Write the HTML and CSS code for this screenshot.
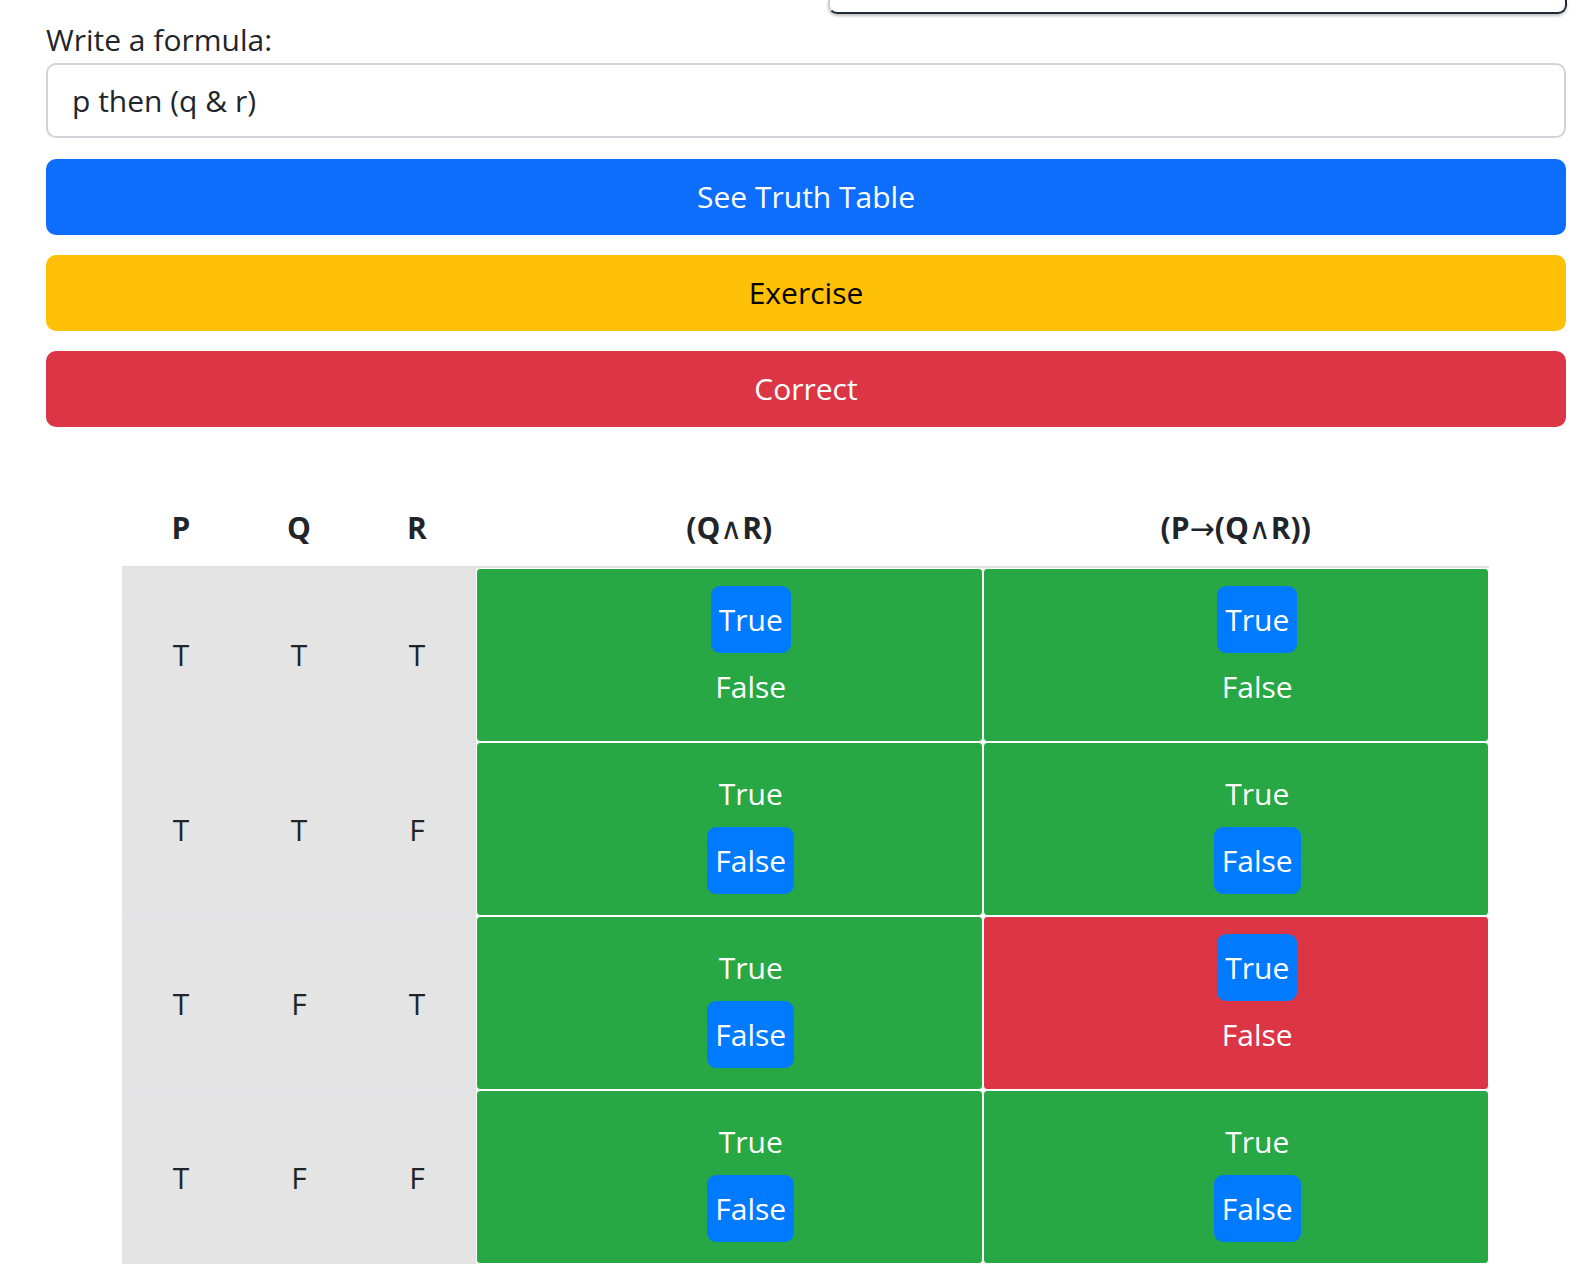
FILE: index.html
```html
<!DOCTYPE html>
<html lang="en">
<head>
<meta charset="utf-8">
<title>Truth Table</title>
<link rel="stylesheet" href="styles.css">
</head>
<body>
<div class="page">
  <div class="prev-box"></div>
  <label class="form-label" for="formula">Write a formula:</label>
  <input id="formula" class="formula-input" type="text" value="p then (q &amp; r)">
  <button class="btn btn-primary">See Truth Table</button>
  <button class="btn btn-warning">Exercise</button>
  <button class="btn btn-danger">Correct</button>

  <table class="truth">
    <thead>
      <tr>
        <th class="var">P</th>
        <th class="var">Q</th>
        <th class="var">R</th>
        <th class="expr">(Q<span class="sym">∧</span>R)</th>
        <th class="expr">(P<span class="sym">→</span>(Q<span class="sym">∧</span>R))</th>
      </tr>
    </thead>
    <tbody>
      <tr>
        <td class="val">T</td><td class="val">T</td><td class="val">T</td>
        <td class="res ok"><div class="opts"><span class="opt sel">True</span><span class="opt">False</span></div></td>
        <td class="res ok"><div class="opts"><span class="opt sel">True</span><span class="opt">False</span></div></td>
      </tr>
      <tr>
        <td class="val">T</td><td class="val">T</td><td class="val">F</td>
        <td class="res ok"><div class="opts"><span class="opt">True</span><span class="opt sel">False</span></div></td>
        <td class="res ok"><div class="opts"><span class="opt">True</span><span class="opt sel">False</span></div></td>
      </tr>
      <tr>
        <td class="val">T</td><td class="val">F</td><td class="val">T</td>
        <td class="res ok"><div class="opts"><span class="opt">True</span><span class="opt sel">False</span></div></td>
        <td class="res bad"><div class="opts"><span class="opt sel">True</span><span class="opt">False</span></div></td>
      </tr>
      <tr>
        <td class="val">T</td><td class="val">F</td><td class="val">F</td>
        <td class="res ok"><div class="opts"><span class="opt">True</span><span class="opt sel">False</span></div></td>
        <td class="res ok"><div class="opts"><span class="opt">True</span><span class="opt sel">False</span></div></td>
      </tr>
    </tbody>
  </table>
</div>
</body>
</html>
```
FILE: styles.css
```css
html, body {
  margin: 0;
  padding: 0;
  background: #fff;
}

body {
  font-family: "Open Sans", "Noto Sans", "Liberation Sans", sans-serif;
  font-size: 30px;
  line-height: 48px;
  color: #212529;
}

.page {
  padding: 0 30px 0 46px;
}

.prev-box {
  width: 735px;
  height: 12px;
  margin-left: auto;
  margin-right: -1px;
  border: 2px solid #1f2a36;
  border-top: 0;
  border-left-color: #c9ced4;
  border-radius: 0 0 9px 9px;
  box-shadow: 0 2px 3px rgba(0, 0, 0, 0.25);
}

.form-label {
  display: block;
  margin-top: 2px;
  line-height: 47px;
}

.formula-input {
  display: block;
  box-sizing: border-box;
  width: 100%;
  height: 75px;
  margin: 0;
  padding: 0 24px;
  border: 2px solid #ced4da;
  border-radius: 10px;
  font-family: inherit;
  font-size: 30px;
  color: #212529;
  background: #fff;
  outline: none;
}

.btn {
  display: block;
  box-sizing: border-box;
  width: 100%;
  height: 76px;
  margin-top: 20px;
  padding: 0;
  border: 0;
  border-radius: 10px;
  font-family: inherit;
  font-size: 30px;
  line-height: 76px;
  text-align: center;
}

.formula-input + .btn {
  margin-top: 21px;
}

.btn-primary {
  background: #0d6efd;
  color: #fff;
}

.btn-warning {
  background: #ffc107;
  color: #000;
}

.btn-danger {
  background: #dc3545;
  color: #fff;
}

.truth {
  width: 1367px;
  margin: 63px 0 0 76px;
  border-collapse: separate;
  border-spacing: 0;
  table-layout: fixed;
}

.truth th {
  height: 76px;
  padding: 0;
  font-weight: 700;
  text-align: center;
  vertical-align: middle;
  border-bottom: 2px solid #dee2e6;
}

.truth th .sym {
  font-family: "DejaVu Sans", sans-serif;
  font-weight: 400;
  font-size: 30px;
}

.truth th.var {
  width: 118px;
}

.truth td {
  padding: 0;
  text-align: center;
  vertical-align: middle;
}

.truth td.val {
  height: 173px;
  background: #e4e4e4;
  border-top: 1px solid #dde1e6;
}

.truth tbody tr:first-child td.val {
  height: 174px;
  border-top: 0;
}

.truth td.res {
  box-sizing: border-box;
  border: 1px solid #fff;
  border-radius: 4px;
  color: #fff;
}

.truth td.ok {
  background: #28a745;
}

.truth td.bad {
  background: #dc3545;
}

.opts {
  display: flex;
  flex-direction: column;
  align-items: center;
  padding-left: 43px;
  margin-top: -4px;
}

.opt {
  display: block;
  padding: 10px 8px 9px;
  line-height: 48px;
  border-radius: 9px;
}

.opt.sel {
  background: #007bff;
}
```
